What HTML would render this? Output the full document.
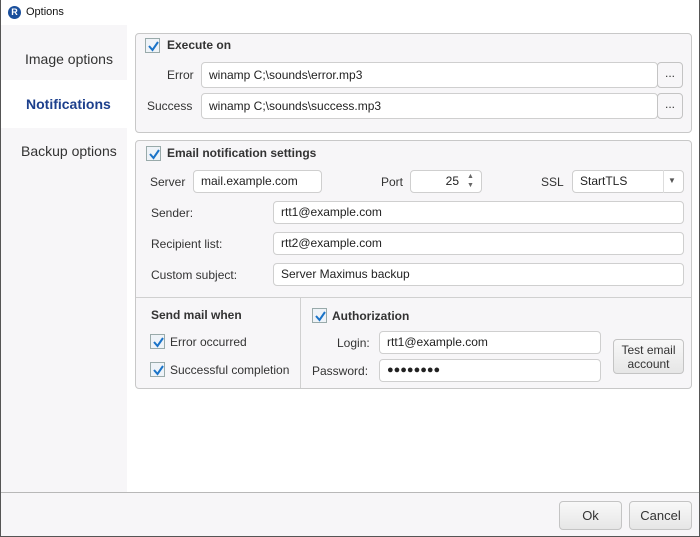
<!DOCTYPE html>
<html><head><style>
*{box-sizing:border-box;margin:0;padding:0}
body{width:700px;height:537px;position:relative;background:#fff;font-family:"Liberation Sans",sans-serif;font-size:12px;color:#222;overflow:hidden}
.a{position:absolute}
.win{left:0;top:0;width:700px;height:537px;border:1px solid #555;border-top:none}
.side{left:1px;top:25px;width:126px;height:467px;background:#f7f6f8}
.grp{background:#f7f6f8;border:1px solid #c8c8c8;border-radius:4px}
.inp{background:#fff;border:1px solid #cfcfcf;border-radius:4px;padding-left:7px;line-height:21px;font-size:12px;white-space:nowrap;overflow:hidden}
.btn{background:linear-gradient(#f8f8f8,#e6e6e6);border:1px solid #c4c4c4;border-radius:4px;text-align:center;font-size:12px;color:#333}
.cb{width:15px;height:15px;border:1px solid #9aa;background:#eef3f8}
.cb svg{position:absolute;left:0;top:0}
.b{font-weight:bold;color:#333}
.l{color:#333}
</style></head><body>
<div class="a win"></div>
<div class="a" style="left:8px;top:6px;width:13px;height:13px;border-radius:50%;background:#1a4f9c;color:#fff;font-size:9px;font-weight:bold;text-align:center;line-height:13px">R</div>
<div class="a" style="left:26px;top:6px;font-size:11px;color:#111">Options</div>
<div class="a side"></div>
<div class="a" style="left:1px;top:80px;width:126px;height:48px;background:#fff"></div>
<div class="a" style="left:25px;top:51px;font-size:14px;color:#333">Image options</div>
<div class="a" style="left:26px;top:96px;font-size:14px;font-weight:bold;color:#1c3f8c">Notifications</div>
<div class="a" style="left:21px;top:143px;font-size:14px;color:#333">Backup options</div>
<div class="a" style="left:1px;top:492px;width:698px;height:44px;background:#f7f6f8;border-top:1px solid #b8b8b8"></div>

<div class="a grp" style="left:135px;top:33px;width:557px;height:100px"></div>
<div class="a cb" style="left:145px;top:38px"><svg width="15" height="15"><path d="M3 7l3.5 4L12 3" stroke="#1a73c8" stroke-width="2" fill="none"/></svg></div>
<div class="a b" style="left:167px;top:38px">Execute on</div>
<div class="a l" style="left:167px;top:68px">Error</div>
<div class="a inp" style="left:201px;top:62px;width:457px;height:26px;line-height:24px">winamp C;\sounds\error.mp3</div>
<div class="a btn" style="left:657px;top:62px;width:26px;height:26px;line-height:20px;background:#f7f6f8">...</div>
<div class="a l" style="left:147px;top:99px">Success</div>
<div class="a inp" style="left:201px;top:93px;width:457px;height:26px;line-height:24px">winamp C;\sounds\success.mp3</div>
<div class="a btn" style="left:657px;top:93px;width:26px;height:26px;line-height:20px;background:#f7f6f8">...</div>

<div class="a grp" style="left:135px;top:140px;width:557px;height:249px"></div>
<div class="a" style="left:136px;top:297px;width:555px;height:1px;background:#d0d0d0"></div>
<div class="a" style="left:300px;top:298px;width:1px;height:90px;background:#d0d0d0"></div>
<div class="a cb" style="left:146px;top:146px"><svg width="15" height="15"><path d="M3 7l3.5 4L12 3" stroke="#1a73c8" stroke-width="2" fill="none"/></svg></div>
<div class="a b" style="left:167px;top:146px">Email notification settings</div>
<div class="a l" style="left:150px;top:175px">Server</div>
<div class="a inp" style="left:193px;top:170px;width:129px;height:23px">mail.example.com</div>
<div class="a l" style="left:381px;top:175px">Port</div>
<div class="a inp" style="left:410px;top:170px;width:72px;height:23px;text-align:right;padding-right:22px">25</div>
<div class="a" style="left:467px;top:172px;font-size:7px;color:#666;line-height:9px">▲<br>▼</div>
<div class="a l" style="left:541px;top:175px">SSL</div>
<div class="a inp" style="left:572px;top:170px;width:112px;height:23px">StartTLS</div>
<div class="a" style="left:663px;top:170px;width:1px;height:23px;background:#ddd"></div>
<div class="a" style="left:668px;top:176px;font-size:8px;color:#555">▼</div>
<div class="a l" style="left:151px;top:206px">Sender:</div>
<div class="a inp" style="left:273px;top:201px;width:411px;height:23px">rtt1@example.com</div>
<div class="a l" style="left:151px;top:237px">Recipient list:</div>
<div class="a inp" style="left:273px;top:232px;width:411px;height:23px">rtt2@example.com</div>
<div class="a l" style="left:151px;top:268px">Custom subject:</div>
<div class="a inp" style="left:273px;top:263px;width:411px;height:23px">Server Maximus backup</div>

<div class="a b" style="left:151px;top:308px;font-size:12px">Send mail when</div>
<div class="a cb" style="left:150px;top:334px"><svg width="15" height="15"><path d="M3 7l3.5 4L12 3" stroke="#1a73c8" stroke-width="2" fill="none"/></svg></div>
<div class="a l" style="left:170px;top:335px">Error occurred</div>
<div class="a cb" style="left:150px;top:362px"><svg width="15" height="15"><path d="M3 7l3.5 4L12 3" stroke="#1a73c8" stroke-width="2" fill="none"/></svg></div>
<div class="a l" style="left:170px;top:363px">Successful completion</div>
<div class="a cb" style="left:312px;top:308px"><svg width="15" height="15"><path d="M3 7l3.5 4L12 3" stroke="#1a73c8" stroke-width="2" fill="none"/></svg></div>
<div class="a b" style="left:332px;top:309px">Authorization</div>
<div class="a l" style="left:337px;top:336px">Login:</div>
<div class="a inp" style="left:379px;top:331px;width:222px;height:23px">rtt1@example.com</div>
<div class="a l" style="left:312px;top:364px">Password:</div>
<div class="a inp" style="left:379px;top:359px;width:222px;height:23px;font-size:11px;letter-spacing:0px">●●●●●●●●</div>
<div class="a btn" style="left:613px;top:339px;width:71px;height:35px;line-height:14px;padding-top:3px">Test email<br>account</div>

<div class="a btn" style="left:559px;top:501px;width:63px;height:29px;line-height:27px;font-size:13px">Ok</div>
<div class="a btn" style="left:629px;top:501px;width:63px;height:29px;line-height:27px;font-size:13px">Cancel</div>
</body></html>
